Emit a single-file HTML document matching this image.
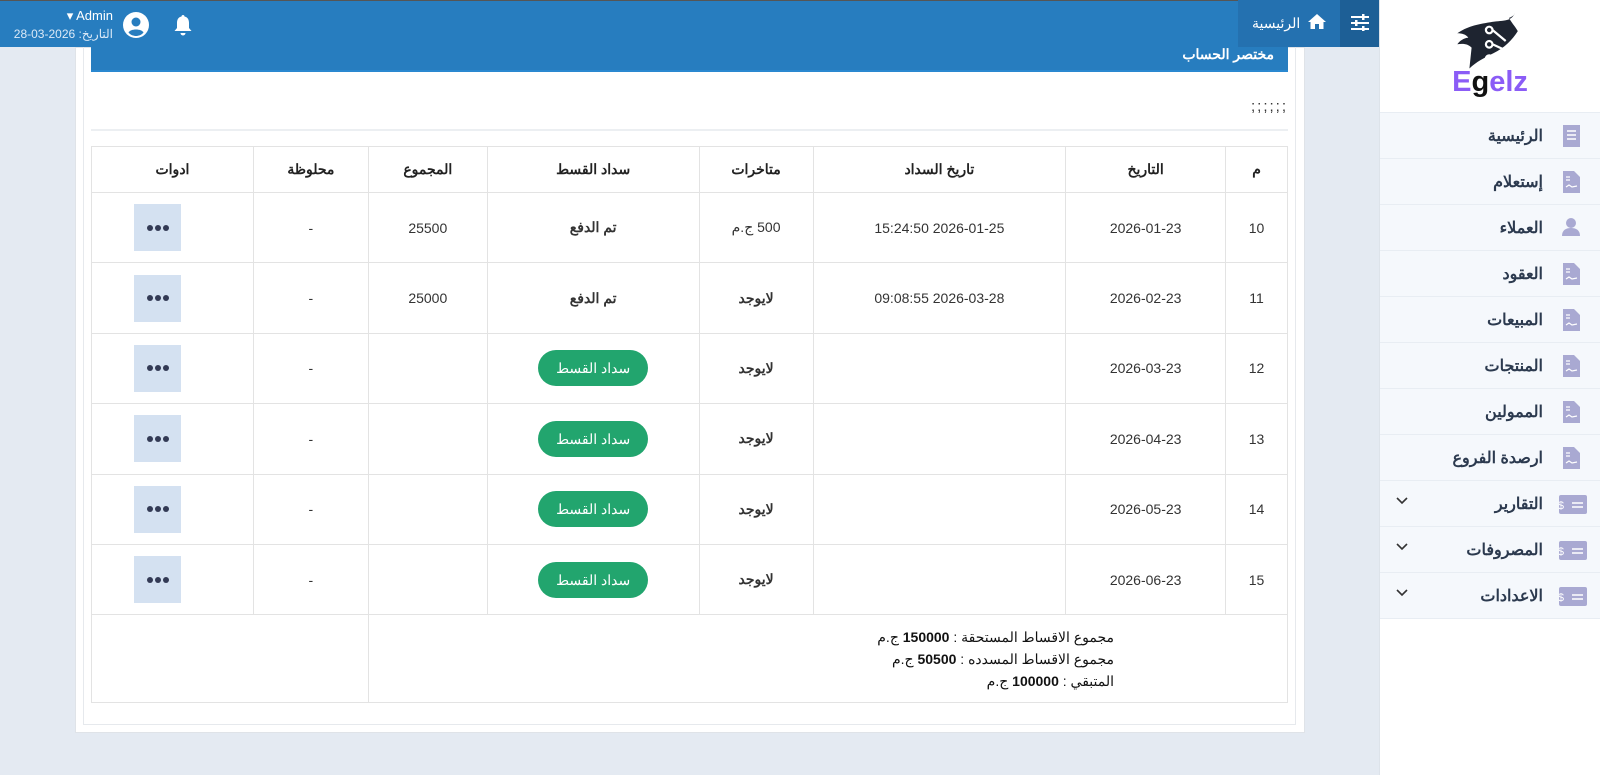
<!DOCTYPE html>
<html><head><meta charset="utf-8"><style>
*{box-sizing:border-box;margin:0;padding:0}
body{width:1600px;height:775px;background:#e4eaf2;font-family:"Liberation Sans","Noto Sans CJK SC",sans-serif;position:relative;overflow:hidden;color:#333}
.nav{position:absolute;left:0;top:0;width:1379px;height:47px;background:#277dbf;border-top:1px solid #555}
.home{position:absolute;left:1238px;top:0;width:102px;height:47px;background:#2471b0;color:#fff;font-size:14px}
.tog{position:absolute;left:1340px;top:0;width:39px;height:47px;background:#1d5f96}
.side{position:absolute;left:1379px;top:0;width:221px;height:775px;background:#fff;border-left:1px solid #dde3ea}
.logo{height:113px;border-bottom:1px solid #e8edf3;position:relative}
.item{height:46px;background:#f5f8fc;border-bottom:1px solid #e8edf3;position:relative;direction:rtl}
.item span{position:absolute;right:57px;top:13px;font-size:16px;font-weight:bold;color:#2c3a4f}
.item .ic{position:absolute;right:20px;top:12px}
.item .ch{position:absolute;left:16px;top:16px}
.card{position:absolute;left:75px;top:47px;width:1230px;height:686px;background:#fff;border:1px solid #dfe3e8}
.inner{position:absolute;left:83px;top:47px;width:1213px;height:678px;border:1px solid #e6e9ed;border-top:0}
.bar{position:absolute;left:91px;top:47px;width:1197px;height:25px;background:#277dbf;border-bottom:2px solid #2a88d0;color:#fff;font-size:14px;font-weight:bold;direction:rtl;padding:0 14px}
table{position:absolute;left:91px;top:146px;width:1197px;border-collapse:collapse;direction:rtl;font-size:14px}
td,th{border:1px solid #e3e3e3;text-align:center;vertical-align:middle;color:#333}
th{height:46px;font-weight:bold;color:#222}
td{height:70.4px}
td.tl{text-align:left;padding-left:42px}
.dots{display:inline-flex;align-items:center;justify-content:center;gap:2px;width:47px;height:47px;background:#d4e1f1;vertical-align:middle}
.dots i{display:block;width:6px;height:6px;border-radius:3px;background:#333a55}
.btn{display:inline-block;width:110px;height:36px;border-radius:18px;background:#22a56e;color:#fff;line-height:36px;font-size:14px}
.ft{height:88px;text-align:right;line-height:22px;font-size:14px;color:#111}
</style></head><body>
<div class="nav">
  <div style="position:absolute;left:0;top:7px;width:113px;text-align:right;color:#fff;font-size:13px">&#9662; Admin</div>
  <div style="position:absolute;left:0;top:26px;width:113px;text-align:right;color:#dbe9f7;font-size:12px;direction:ltr"><bdo dir="ltr">28-03-2026</bdo> <bdi dir="rtl">التاريخ:</bdi></div>
  <svg style="position:absolute;left:123px;top:11px" width="26" height="26" viewBox="0 0 26 26"><circle cx="13" cy="13" r="13" fill="#fff"/><circle cx="13" cy="10" r="4.5" fill="#277dbf"/><path d="M5.5 20.5c2-4 13-4 15 0c-2 2.5-5 3.5-7.5 3.5s-5.5-1-7.5-3.5z" fill="#277dbf"/></svg>
  <svg style="position:absolute;left:173px;top:13px" width="20" height="22" viewBox="0 0 20 22"><path d="M10 1c1 0 1.5.7 1.5 1.5C15 3.3 16 6 16 9v5l2.5 3H1.5L4 14V9c0-3 1-5.7 4.5-6.5C8.5 1.7 9 1 10 1z" fill="#fff"/><path d="M7.5 19h5a2.5 2.5 0 0 1-5 0z" fill="#fff"/></svg>
</div>
<div class="home"><span style="position:absolute;left:14px;top:15px">الرئيسية</span><svg style="position:absolute;left:70px;top:14px" width="18" height="15" viewBox="0 0 18 15"><path d="M9 0L0 8h2.5v7h4.5v-5h4v5h4.5V8H18z" fill="#fff"/></svg></div>
<div class="tog"><svg style="position:absolute;left:11px;top:14px" width="18" height="17" viewBox="0 0 18 17" fill="#fff"><rect x="0" y="2" width="18" height="2"/><rect x="0" y="8" width="18" height="2"/><rect x="0" y="14" width="18" height="2"/><rect x="11" y="0" width="2.5" height="6"/><rect x="4" y="6" width="2.5" height="6"/><rect x="11" y="12" width="2.5" height="5"/></svg></div>
<div class="side">
 <div class="logo">
  <svg style="position:absolute;left:74px;top:12px" width="66" height="58" viewBox="0 0 60 50"><path d="M55 0c-3 8-12 6-22 8C20 10 12 12 3 18c4 0 8 1 10 4-4 0-8 3-10 6 6-1 10 0 13 3l-2 19c6-6 14-10 22-14 10-5 17-12 22-20-3-5-6-8-8-12 3-1 5-3 5-4z" fill="#1e2430"/><g stroke="#fff" stroke-width="2" fill="none"><circle cx="32" cy="15" r="3"/><circle cx="32" cy="28" r="3"/><circle cx="32" cy="41" r="3"/><path d="M35 15l12 10M35 28l13 6M35 41l10-5"/></g></svg>
  <div style="position:absolute;left:0;width:100%;top:66px;text-align:center;font-size:29px;font-weight:bold"><span style="color:#8b5cf6">E</span><span style="color:#111">g</span><span style="color:#8b5cf6">elz</span></div>
 </div>
 <div class="item"><span>الرئيسية</span><svg class="ic" width="17" height="22"><rect x="0" y="0" width="17" height="22" fill="#a9a9d2"/><path d="M4 6h9M4 10h9M4 14h9" stroke="#fff" stroke-width="1.5"/></svg></div>
 <div class="item"><span>إستعلام</span><svg class="ic" width="17" height="22"><path d="M0 0h11l6 6v16H0z" fill="#a9a9d2"/><path d="M3 6h4M3 9h4M3 16l3-2 3 2 5-1" stroke="#fff" stroke-width="1.2" fill="none"/></svg></div>
 <div class="item"><span>العملاء</span><svg class="ic" width="18" height="20"><circle cx="9" cy="6" r="5" fill="#a9a9d2"/><path d="M0 19c0-6 4-8 9-8s9 2 9 8z" fill="#a9a9d2"/></svg></div>
 <div class="item"><span>العقود</span><svg class="ic" width="17" height="22"><path d="M0 0h11l6 6v16H0z" fill="#a9a9d2"/><path d="M3 6h4M3 9h4M3 16l3-2 3 2 5-1" stroke="#fff" stroke-width="1.2" fill="none"/></svg></div>
 <div class="item"><span>المبيعات</span><svg class="ic" width="17" height="22"><path d="M0 0h11l6 6v16H0z" fill="#a9a9d2"/><path d="M3 6h4M3 9h4M3 16l3-2 3 2 5-1" stroke="#fff" stroke-width="1.2" fill="none"/></svg></div>
 <div class="item"><span>المنتجات</span><svg class="ic" width="17" height="22"><path d="M0 0h11l6 6v16H0z" fill="#a9a9d2"/><path d="M3 6h4M3 9h4M3 16l3-2 3 2 5-1" stroke="#fff" stroke-width="1.2" fill="none"/></svg></div>
 <div class="item"><span>الممولين</span><svg class="ic" width="17" height="22"><path d="M0 0h11l6 6v16H0z" fill="#a9a9d2"/><path d="M3 6h4M3 9h4M3 16l3-2 3 2 5-1" stroke="#fff" stroke-width="1.2" fill="none"/></svg></div>
 <div class="item"><span>ارصدة الفروع</span><svg class="ic" width="17" height="22"><path d="M0 0h11l6 6v16H0z" fill="#a9a9d2"/><path d="M3 6h4M3 9h4M3 16l3-2 3 2 5-1" stroke="#fff" stroke-width="1.2" fill="none"/></svg></div>
 <div class="item"><span>التقارير</span><svg class="ic" style="right:13px;top:14px" width="28" height="19"><rect width="28" height="19" rx="2" fill="#a9a9d2"/><text x="5" y="14" font-size="11" fill="#fff" font-family="Liberation Sans">$</text><path d="M13 8h11M13 12h11" stroke="#fff" stroke-width="1.5"/></svg><svg class="ch" width="12" height="8"><path d="M1 1l5 5 5-5" stroke="#333" stroke-width="1.6" fill="none"/></svg></div>
 <div class="item"><span>المصروفات</span><svg class="ic" style="right:13px;top:14px" width="28" height="19"><rect width="28" height="19" rx="2" fill="#a9a9d2"/><text x="5" y="14" font-size="11" fill="#fff" font-family="Liberation Sans">$</text><path d="M13 8h11M13 12h11" stroke="#fff" stroke-width="1.5"/></svg><svg class="ch" width="12" height="8"><path d="M1 1l5 5 5-5" stroke="#333" stroke-width="1.6" fill="none"/></svg></div>
 <div class="item"><span>الاعدادات</span><svg class="ic" style="right:13px;top:14px" width="28" height="19"><rect width="28" height="19" rx="2" fill="#a9a9d2"/><text x="5" y="14" font-size="11" fill="#fff" font-family="Liberation Sans">$</text><path d="M13 8h11M13 12h11" stroke="#fff" stroke-width="1.5"/></svg><svg class="ch" width="12" height="8"><path d="M1 1l5 5 5-5" stroke="#333" stroke-width="1.6" fill="none"/></svg></div>
</div>
<div class="card"></div>
<div class="inner"></div>
<div class="bar"><span style="position:relative;top:-1px">مختصر الحساب</span></div>
<div style="position:absolute;left:1200px;width:88px;top:98px;text-align:right;font-size:15px;color:#333;letter-spacing:2px">;;;;;;</div>
<div style="position:absolute;left:91px;top:129px;width:1197px;height:2px;background:#eceff2"></div>
<table>
<colgroup><col style="width:62px"><col style="width:160px"><col style="width:253px"><col style="width:114px"><col style="width:212px"><col style="width:119px"><col style="width:115px"><col style="width:162px"></colgroup>
<tr><th>م</th><th>التاريخ</th><th>تاريخ السداد</th><th>متاخرات</th><th>سداد القسط</th><th>المجموع</th><th>محلوظة</th><th>ادوات</th></tr>
<tr><td>10</td><td>2026-01-23</td><td>2026-01-25 15:24:50</td><td>500 ج.م</td><td><b>تم الدفع</b></td><td>25500</td><td>-</td><td class="tl"><span class="dots"><i></i><i></i><i></i></span></td></tr>
<tr><td>11</td><td>2026-02-23</td><td>2026-03-28 09:08:55</td><td><b>لايوجد</b></td><td><b>تم الدفع</b></td><td>25000</td><td>-</td><td class="tl"><span class="dots"><i></i><i></i><i></i></span></td></tr>
<tr><td>12</td><td>2026-03-23</td><td></td><td><b>لايوجد</b></td><td><span class="btn">سداد القسط</span></td><td></td><td>-</td><td class="tl"><span class="dots"><i></i><i></i><i></i></span></td></tr>
<tr><td>13</td><td>2026-04-23</td><td></td><td><b>لايوجد</b></td><td><span class="btn">سداد القسط</span></td><td></td><td>-</td><td class="tl"><span class="dots"><i></i><i></i><i></i></span></td></tr>
<tr><td>14</td><td>2026-05-23</td><td></td><td><b>لايوجد</b></td><td><span class="btn">سداد القسط</span></td><td></td><td>-</td><td class="tl"><span class="dots"><i></i><i></i><i></i></span></td></tr>
<tr><td>15</td><td>2026-06-23</td><td></td><td><b>لايوجد</b></td><td><span class="btn">سداد القسط</span></td><td></td><td>-</td><td class="tl"><span class="dots"><i></i><i></i><i></i></span></td></tr>
<tr><td colspan="6" class="ft" style="padding-right:173px">مجموع الاقساط المستحقة : <b>150000</b> ج.م<br>مجموع الاقساط المسدده : <b>50500</b> ج.م<br>المتبقي : <b>100000</b> ج.م</td><td colspan="2"></td></tr>
</table>
</body></html>
